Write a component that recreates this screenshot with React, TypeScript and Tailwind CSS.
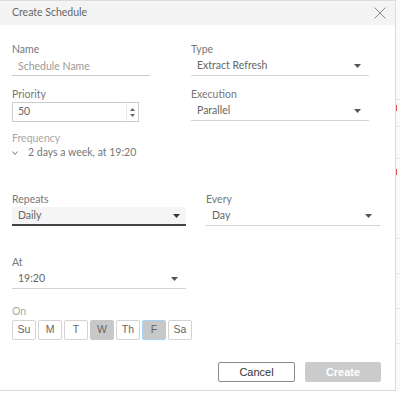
import React from "react";

const Arrow = ({ dark }: { dark?: boolean }) => (
  <svg width="7" height="4" viewBox="0 0 7 4" className="shrink-0">
    <path d="M0 0 L7 0 L3.5 4 Z" fill={dark ? "#333" : "#555"} />
  </svg>
);

const Label = ({ children, light }: { children: React.ReactNode; light?: boolean }) => (
  <div className={`h-[14px] leading-[14px] text-[10.5px] ${light ? "text-[#a8a8a8]" : "text-[#777]"}`}>{children}</div>
);

const Select = ({ value, className = "" }: { value: string; className?: string }) => (
  <div className={`flex items-center justify-between pl-[6px] pr-[8px] h-[19px] border-b border-[#d4d4d4] text-[10.5px] text-[#666] ${className}`}>
    <span>{value}</span>
    <Arrow />
  </div>
);

export default function App() {
  const days = ["Su", "M", "T", "W", "Th", "F", "Sa"];
  return (
    <div className="w-[400px] h-[393px] bg-white flex overflow-hidden" style={{ fontFamily: "Lato, 'Open Sans', sans-serif" }}>
      <div className="w-[396px] h-[391px] border-r border-b border-t border-[#dcdcdc] flex flex-col shrink-0">
        <div className="h-[24px] bg-[#f4f4f4] flex items-center justify-between pl-[12px] pr-[9px]">
          <span className="text-[10.5px] text-[#666]">Create Schedule</span>
          <svg width="12" height="12" viewBox="0 0 12 12">
            <path d="M0.5 0.5 L11.5 11.5 M11.5 0.5 L0.5 11.5" stroke="#888" strokeWidth="1" />
          </svg>
        </div>
        <div className="pl-[12px] flex flex-col">
          <div className="flex mt-[17px]">
            <div className="w-[138px]">
              <Label>Name</Label>
              <div className="mt-[2px] h-[18px] border-b border-[#ccc] pl-[6px] text-[10.5px] text-[#999] leading-[17px]">Schedule Name</div>
            </div>
            <div className="ml-[41px] w-[178px]">
              <Label>Type</Label>
              <div className="mt-[1px]"><Select value="Extract Refresh" /></div>
            </div>
          </div>
          <div className="flex mt-[11px]">
            <div className="w-[127px]">
              <Label>Priority</Label>
              <div className="mt-[1px] h-[20px] border border-[#ccc] flex items-center justify-between pl-[5px] text-[10.5px] text-[#666]">
                <span>50</span>
                <div className="w-[11px] h-[18px] mr-[1px] flex flex-col items-center justify-center gap-[3px] border-l border-[#e8e8e8]">
                  <svg width="5" height="3" viewBox="0 0 5 3"><path d="M0 3 L5 3 L2.5 0 Z" fill="#666" /></svg>
                  <svg width="5" height="3" viewBox="0 0 5 3"><path d="M0 0 L5 0 L2.5 3 Z" fill="#666" /></svg>
                </div>
              </div>
            </div>
            <div className="ml-[52px] w-[178px]">
              <Label>Execution</Label>
              <div className="mt-[1px]"><Select value="Parallel" /></div>
            </div>
          </div>
          <div className="mt-[9px]">
            <Label light>Frequency</Label>
            <div className="mt-[1px] h-[14px] flex items-center gap-[10px] text-[10.5px] text-[#777]">
              <svg width="6" height="4" viewBox="0 0 6 4"><path d="M0.5 0.5 L3 3.5 L5.5 0.5" stroke="#777" fill="none" strokeWidth="1" /></svg>
              <span>2 days a week, at 19:20</span>
            </div>
          </div>
          <div className="flex mt-[32px]">
            <div className="w-[174px]">
              <Label>Repeats</Label>
              <div className="mt-[1px] flex items-center justify-between pl-[6px] pr-[6px] h-[19px] bg-[#f5f5f5] border-b-[2px] border-[#444] text-[10.5px] text-[#666]">
                <span>Daily</span>
                <Arrow dark />
              </div>
            </div>
            <div className="ml-[20px] w-[174px]">
              <Label>Every</Label>
              <div className="mt-[1px]"><Select value="Day" /></div>
            </div>
          </div>
          <div className="mt-[29px] w-[174px]">
            <Label>At</Label>
            <div className="mt-[1px]"><Select value="19:20" /></div>
          </div>
          <div className="mt-[15px]">
            <Label light>On</Label>
            <div className="mt-[2px] flex gap-[2px]" style={{ fontFamily: "'Liberation Sans', Arial, sans-serif" }}>
              {days.map((d) => {
                const sel = d === "W" || d === "F";
                const focus = d === "F";
                return (
                  <div
                    key={d}
                    className={`w-[24px] h-[20px] rounded-[2px] flex items-center justify-center text-[10.5px] ${
                      sel ? "bg-[#c8c8c8] text-[#666]" : "bg-white text-[#666]"
                    } ${focus ? "border border-[#a9d1f2]" : sel ? "border border-[#c8c8c8]" : "border border-[#d4d4d4]"}`}
                  >
                    {d}
                  </div>
                );
              })}
            </div>
          </div>
          <div className="mt-[22px] flex justify-end pr-[14px] gap-[10px]" style={{ fontFamily: "'Liberation Sans', Arial, sans-serif" }}>
            <div className="w-[77px] h-[20px] border border-[#8a8a8a] rounded-[2px] flex items-center justify-center text-[11px] text-[#333]">Cancel</div>
            <div className="w-[76px] h-[20px] bg-[#cbcbcb] rounded-[2px] flex items-center justify-center text-[11px] font-bold text-white">Create</div>
          </div>
        </div>
      </div>
      <div className="flex-1 h-[393px] bg-[#fafafa] flex flex-col">
        <div className="h-[100px] border-b border-[#e6e6e6]" />
        <div className="h-[16px] flex items-center"><div className="w-[1px] h-[6px] bg-[#d9534f]" /></div>
        <div className="h-[11px] border-b border-[#e6e6e6]" />
        <div className="h-[32px] border-b border-[#e6e6e6]" />
        <div className="h-[25px] flex items-center"><div className="w-[1px] h-[6px] bg-[#d9534f]" /></div>
        <div className="h-[55px] border-b border-[#e6e6e6]" />
        <div className="h-[35px] border-b border-[#e6e6e6]" />
        <div className="h-[35px] border-b border-[#e6e6e6]" />
        <div className="h-[35px] border-b border-[#e6e6e6]" />
      </div>
    </div>
  );
}
